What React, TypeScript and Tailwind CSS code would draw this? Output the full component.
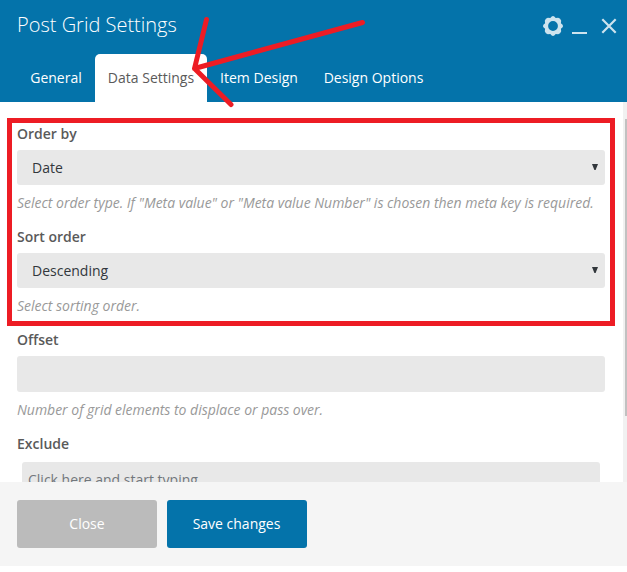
import { useState, type ReactNode } from 'react';
import clsx from 'clsx';

const TABS = ['General', 'Data Settings', 'Item Design', 'Design Options'];

const TAB_WIDTHS: Record<string, string> = {
	General: 'w-[78px]',
	'Data Settings': 'w-[112px]',
	'Item Design': 'w-[104px]',
	'Design Options': 'w-[125px]',
};

export default function App() {
	const [tab, setTab] = useState('Data Settings');

	return (
		<div className="relative flex h-[572px] w-[627px] flex-col overflow-hidden bg-white font-['Open_Sans',sans-serif] text-[14px] leading-[20px] text-[#5a5a5a]">
			<header className="flex h-[102px] shrink-0 flex-col justify-between bg-[#0473aa] text-white">
				<div className="flex h-[50px] items-center justify-between pl-[17px] pr-[10px]">
					<h1 className="text-[20px] font-light leading-[28px]">Post Grid Settings</h1>
					<HeaderControls />
				</div>
				<nav className="flex pl-[17px]">
					{TABS.map((name) => (
						<button
							key={name}
							type="button"
							onClick={() => setTab(name)}
							className={clsx(
								'h-12 whitespace-nowrap rounded-t-[5px] text-center',
								TAB_WIDTHS[name],
								name === tab ? 'bg-white text-[#5a5a5a]' : 'font-medium text-white',
							)}
						>
							{name}
						</button>
					))}
				</nav>
			</header>

			<main className="flex h-[380px] shrink-0 overflow-hidden">
				<div className="flex min-w-0 flex-1 flex-col pl-[17px] pr-[18px] pt-[22px]">
					<Field label="Order by" hint={'Select order type. If "Meta value" or "Meta value Number" is chosen then meta key is required.'}>
						<Select value="Date" />
					</Field>
					<Field label="Sort order" hint="Select sorting order.">
						<Select value="Descending" />
					</Field>
					<Field label="Offset" hint="Number of grid elements to displace or pass over.">
						<input type="text" aria-label="Offset" className="block h-9 w-full rounded-[3px] bg-[#e8e8e8] px-[15px] outline-none" />
					</Field>
					<div className="font-semibold">Exclude</div>
					<div className="ml-[5px] mr-[5px] mt-2 h-9 shrink-0 rounded-[3px] bg-[#e8e8e8] px-[6px] pt-2 text-[#72777c]">
						Click here and start typing
					</div>
				</div>
				<div className="w-1 bg-[#f1f1f1] pl-[2px] pt-[17px]">
					<div className="h-[297px] bg-[#c1c1c1]" />
				</div>
			</main>

			<footer className="flex h-[84px] shrink-0 items-center gap-[10px] bg-[#f5f5f5] px-[17px] font-medium text-white">
				<button type="button" className="h-12 w-[140px] rounded-[3px] bg-[#bbb]">Close</button>
				<button type="button" className="h-12 w-[140px] rounded-[3px] bg-[#0473aa] pr-px">Save changes</button>
			</footer>

			<Annotations />
		</div>
	);
}

function Field({ label, hint, children }: { label: string; hint: string; children: ReactNode }) {
	return (
		<div className="mb-[14px] shrink-0">
			<div className="mb-[6px] font-semibold">{label}</div>
			{children}
			<p className="mt-2 whitespace-nowrap italic tracking-[-0.012px] text-[#999]">{hint}</p>
		</div>
	);
}

function Select({ value }: { value: string }) {
	return (
		<div className="flex h-[35px] items-center justify-between rounded-[3px] bg-[#e8e8e8] pl-[15px] pr-[7px] text-[#32373c]">
			<span>{value}</span>
			<svg width="6" height="6" viewBox="0 0 6 6" className="mb-[2px]">
				<path d="M0 0h6L3.6 6H2.4z" fill="currentColor" />
			</svg>
		</div>
	);
}

function HeaderControls() {
	return (
		<div className="flex items-center text-[#cde3ee]">
			<button type="button" aria-label="Settings" className="mt-[2px]">
				<svg width="20" height="20" viewBox="-10 -10 20 20">
					<path
						fill="currentColor"
						fillRule="evenodd"
						d="M-1.3-9.6Q0-10.3 1.3-9.6L2.7-7.9 5.2-8.2Q7.5-7.5 8.2-5.2L7.9-2.7 9.6-1.3Q10.3 0 9.6 1.3L7.9 2.7 8.2 5.2Q7.5 7.5 5.2 8.2L2.7 7.9 1.3 9.6Q0 10.3-1.3 9.6L-2.7 7.9-5.2 8.2Q-7.5 7.5-8.2 5.2L-7.9 2.7-9.6 1.3Q-10.3 0-9.6-1.3L-7.9-2.7-8.2-5.2Q-7.5-7.5-5.2-8.2L-2.7-7.9zM0-4.9A4.9 4.9 0 1 0 0 4.9 4.9 4.9 0 1 0 0-4.9z"
					/>
				</svg>
			</button>
			<button type="button" aria-label="Minimize" className="ml-[9px] mt-[16px]">
				<svg width="15" height="2" viewBox="0 0 15 2">
					<path d="M0 0h15v2H0z" fill="currentColor" />
				</svg>
			</button>
			<button type="button" aria-label="Close panel" className="ml-[14px] mt-[2px]">
				<svg width="16" height="16" viewBox="0 0 16 16">
					<path d="M1.3 1.3l13.4 13.4M14.7 1.3L1.3 14.7" stroke="currentColor" strokeWidth="2.2" />
				</svg>
			</button>
		</div>
	);
}

// red callouts drawn over the panel
function Annotations() {
	return (
		<>
			<div className="pointer-events-none absolute left-[7px] top-[118px] h-[208px] w-[608px] border-[5px] border-[#ed1c24]" />
			<svg width="200" height="100" viewBox="180 12 200 100" className="pointer-events-none absolute left-[180px] top-[12px]">
				<path
					d="M362.5 22.5L194.5 68.5M206.5 19.5L194.5 68.5L231 104.5"
					fill="none"
					stroke="#ed1c24"
					strokeWidth="5"
					strokeLinecap="round"
					strokeLinejoin="round"
				/>
			</svg>
		</>
	);
}
